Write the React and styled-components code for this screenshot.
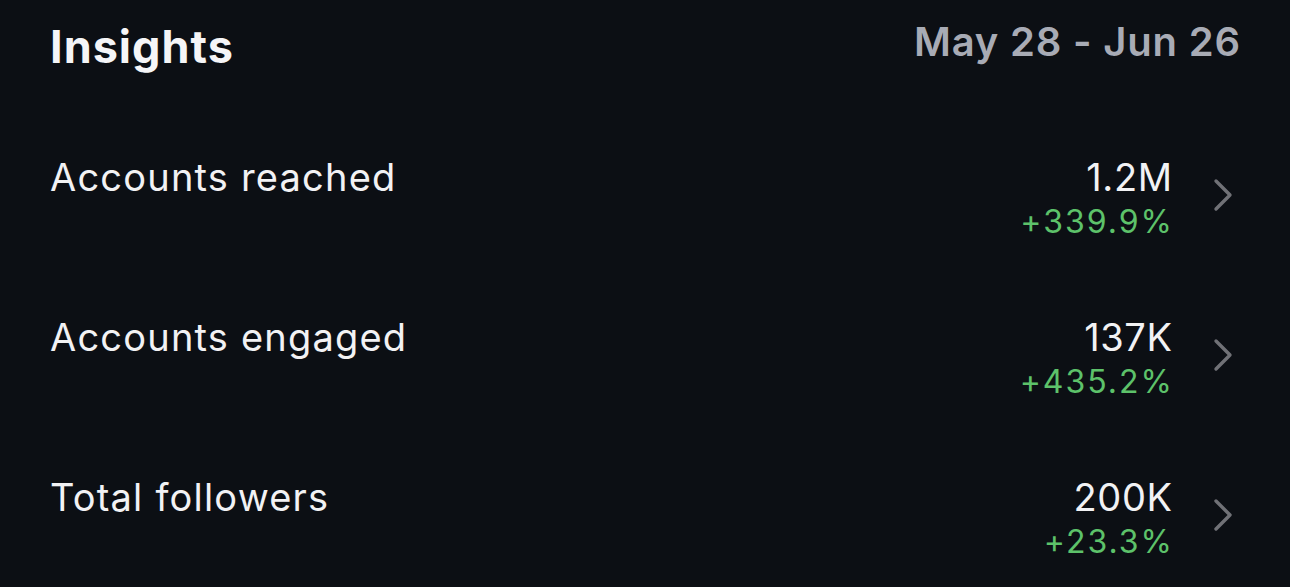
import React from 'react';
import styled, { createGlobalStyle } from 'styled-components';

const GlobalStyle = createGlobalStyle`
  html, body {
    margin: 0;
    padding: 0;
    background: #0c0f14;
  }
  body {
    font-family: Inter, "Noto Sans", "Liberation Sans", sans-serif;
    -webkit-font-smoothing: antialiased;
  }
`;

const Page = styled.div`
  width: 1290px;
  height: 587px;
  overflow: hidden;
  background: #0c0f14;
  padding: 0 50px;
  box-sizing: border-box;
`;

const Header = styled.div`
  height: 121px;
  display: flex;
  justify-content: space-between;
  align-items: flex-start;
`;

const Title = styled.h1`
  margin: 24px 0 0;
  font-size: 45px;
  line-height: 45px;
  font-weight: 700;
  color: #f5f5f7;
  letter-spacing: 1px;
`;

const DateRange = styled.span`
  margin-top: 22px;
  margin-right: -0.8px;
  font-size: 40px;
  line-height: 40px;
  font-weight: 600;
  color: #a8abb5;
  letter-spacing: 0.8px;
`;

const Row = styled.div`
  height: 160px;
  padding: 34px 7px 0 0;
  box-sizing: border-box;
  display: flex;
  justify-content: space-between;
  align-items: flex-start;
`;

const Label = styled.span`
  font-size: 38px;
  line-height: 44px;
  color: #f2f2f4;
  letter-spacing: 1.2px;
`;

const Right = styled.div`
  display: flex;
  align-items: center;
  gap: 41px;
`;

const Stack = styled.div`
  display: flex;
  flex-direction: column;
  align-items: flex-end;
`;

const Value = styled.span`
  font-size: 38px;
  line-height: 44px;
  color: #f2f2f4;
  letter-spacing: 0.6px;
  margin-right: -0.6px;
`;

const Change = styled.span`
  font-size: 32px;
  line-height: 46px;
  color: #5dc26a;
  letter-spacing: 2px;
  margin-right: -2px;
`;

const Chevron = styled.svg`
  width: 20px;
  height: 34px;
  margin-top: -10px;
  flex-shrink: 0;
`;

const rows = [
  { label: 'Accounts reached', value: '1.2M', change: '+339.9%' },
  { label: 'Accounts engaged', value: '137K', change: '+435.2%' },
  { label: 'Total followers', value: '200K', change: '+23.3%' },
];

export default function App() {
  return (
    <Page>
      <GlobalStyle />
      <Header>
        <Title>Insights</Title>
        <DateRange>May 28 - Jun 26</DateRange>
      </Header>
      {rows.map((r) => (
        <Row key={r.label}>
          <Label>{r.label}</Label>
          <Right>
            <Stack>
              <Value>{r.value}</Value>
              <Change>{r.change}</Change>
            </Stack>
            <Chevron viewBox="0 0 20 34">
              <path d="M3 3 L17 17 L3 31" fill="none" stroke="#707176" strokeWidth="3.4" strokeLinecap="round" strokeLinejoin="round" />
            </Chevron>
          </Right>
        </Row>
      ))}
    </Page>
  );
}
